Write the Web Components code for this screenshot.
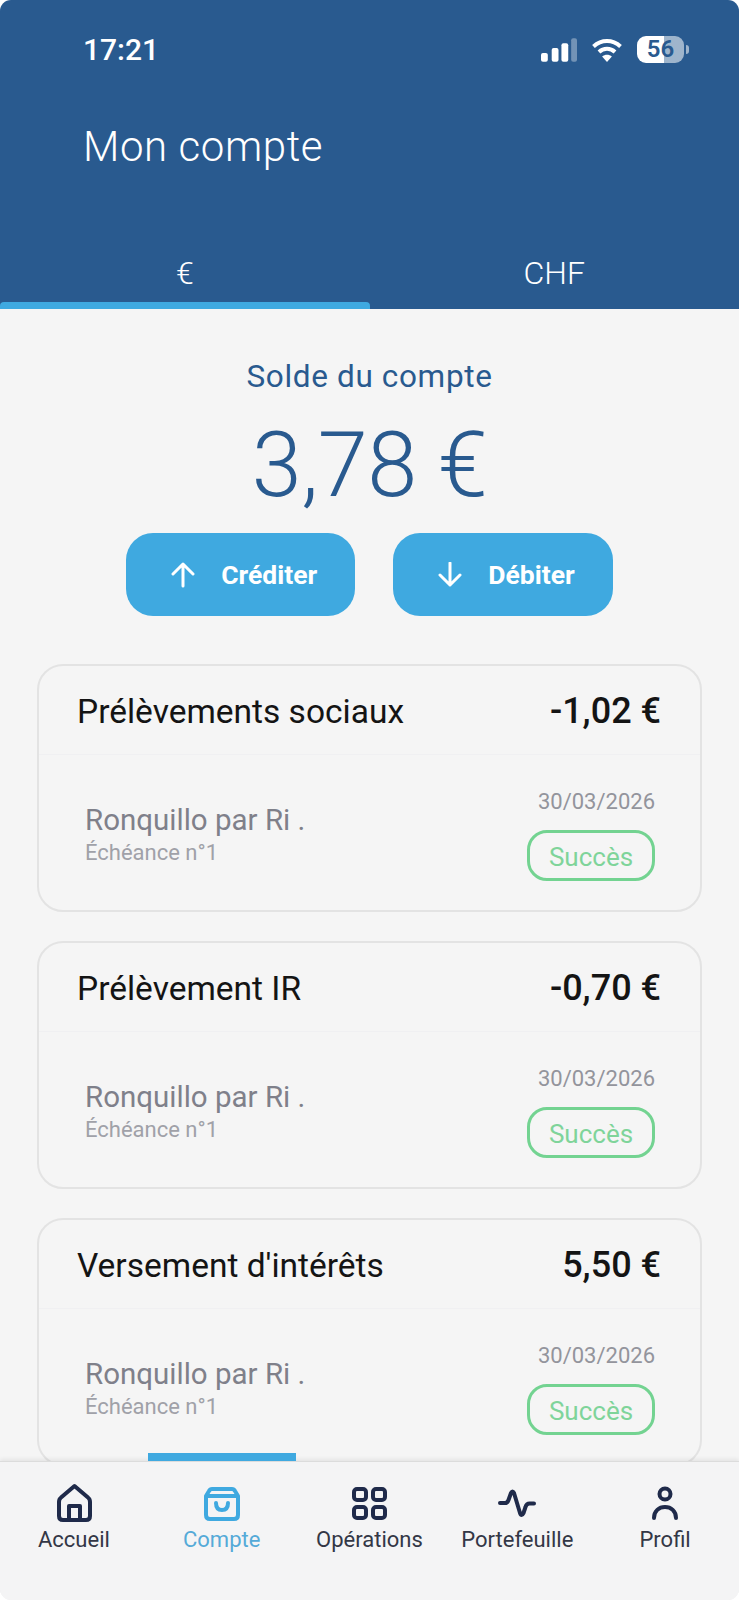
<!DOCTYPE html>
<html>
  <head>
    <meta charset="utf-8">
    <title>Mon compte</title>
    <style>
      html, body { margin: 0; padding: 0; background: #fff; }
      body { width: 739px; height: 1600px; overflow: hidden; font-family: Roboto, "Liberation Sans", sans-serif; }
    </style>
  </head>
  <body>
    <bank-app>
      <app-header slot="header" title="Mon compte" time="17:21" battery="56"></app-header>
      <balance-panel slot="balance" amount="3,78 €"></balance-panel>
      <op-card slot="cards" label="Prélèvements sociaux" amount="-1,02 €"></op-card>
      <op-card slot="cards" label="Prélèvement IR" amount="-0,70 €"></op-card>
      <op-card slot="cards" label="Versement d'intérêts" amount="5,50 €"></op-card>
      <bottom-nav slot="nav"></bottom-nav>
    </bank-app>

    <script>
      var BLUE = "#295a8f";
      var SKY = "#3fa9e0";

      class BankApp extends HTMLElement {
        constructor() {
          super();
          this.attachShadow({mode: "open"}).innerHTML = `
            <style>
              :host { display: flex; flex-direction: column; width: 739px; height: 1600px; background: #f5f5f5; border-radius: 11px; overflow: hidden; }
              main { flex: 1; min-height: 0; overflow: hidden; display: flex; flex-direction: column; }
              .cards { display: flex; flex-direction: column; gap: 29px; margin: 48px 37px 0; }
            </style>
            <slot name="header"></slot>
            <main>
              <slot name="balance"></slot>
              <div class="cards"><slot name="cards"></slot></div>
            </main>
            <slot name="nav"></slot>`;
        }
      }

      class StatusIcons extends HTMLElement {
        constructor() {
          super();
          this.attachShadow({mode: "open"});
        }
        connectedCallback() {
          var level = this.getAttribute("battery");
          this.shadowRoot.innerHTML = `
            <style>
              :host { display: flex; align-items: center; gap: 14px; height: 27px; }
              svg { display: block; }
              .battery { width: 47px; height: 27px; border-radius: 9px; overflow: hidden;
                background: linear-gradient(90deg, #fff 57%, rgba(255,255,255,.55) 57%);
                font: 600 24px/27px Roboto, sans-serif; color: ${BLUE}; text-align: center; }
              .wrap { display: flex; align-items: center; gap: 2px; }
              .nib { width: 3px; height: 9px; border-radius: 0 3px 3px 0; background: rgba(255,255,255,.55); }
            </style>
            <svg width="36" height="24" viewBox="0 0 37 24" fill="#fff">
              <rect x="0" y="15" width="7" height="9" rx="2"/>
              <rect x="11" y="10" width="7" height="14" rx="2"/>
              <rect x="21" y="5" width="7" height="19" rx="2"/>
              <rect x="31" y="0" width="6" height="24" rx="2" opacity=".35"/>
            </svg>
            <svg width="32" height="24" viewBox="0 0 31 24" fill="none" stroke="#fff" stroke-width="4">
              <path d="M2 8.5C10 1.2 21 1.2 29 8.5"/>
              <path d="M7.5 14C12 9.8 19 9.8 23.5 14"/>
              <path d="M15.5 24L10.6 18.6C13.4 16.2 17.6 16.2 20.4 18.6Z" fill="#fff" stroke="none"/>
            </svg>
            <div class="wrap"><div class="battery">${level}</div><div class="nib"></div></div>`;
        }
      }

      class AppHeader extends HTMLElement {
        constructor() {
          super();
          this.attachShadow({mode: "open"});
        }
        connectedCallback() {
          this.shadowRoot.innerHTML = `
            <style>
              :host { display: flex; flex-direction: column; height: 309px; background: ${BLUE}; color: #fff; flex: none; }
              .status { display: flex; justify-content: space-between; align-items: center; height: 27px; margin-top: 36px; padding: 0 50px 0 83px; }
              .time { font-size: 30px; font-weight: 500; }
              h1 { margin: 59px 0 0 83px; font-size: 42px; line-height: 50px; font-weight: 300; letter-spacing: .6px; }
              .tabs { display: flex; margin-top: auto; height: 69px; }
              .tab { flex: 1; display: flex; flex-direction: column; font-size: 32px; font-weight: 300; }
              .tab span { flex: 1; display: flex; align-items: center; justify-content: center; padding-top: 3px; }
              .tab i { display: block; height: 7px; border-radius: 4px 4px 0 0; }
              .tab.on i { background: ${SKY}; }
            </style>
            <div class="status">
              <span class="time">${this.getAttribute("time")}</span>
              <status-icons battery="${this.getAttribute("battery")}"></status-icons>
            </div>
            <h1>${this.getAttribute("title")}</h1>
            <div class="tabs">
              <div class="tab on"><span>€</span><i></i></div>
              <div class="tab"><span>CHF</span><i></i></div>
            </div>`;
        }
      }

      class ActionButton extends HTMLElement {
        constructor() {
          super();
          this.attachShadow({mode: "open"});
        }
        connectedCallback() {
          var d = this.getAttribute("dir") == "up" ? "M12 24V2M2 12L12 2L22 12" : "M12 1V23M2 13L12 23L22 13";
          this.shadowRoot.innerHTML = `
            <style>
              :host { display: flex; align-items: center; gap: 26px; height: 83px; padding: 0 38px 0 45px; border-radius: 27px; background: ${SKY}; color: #fff; font-size: 26.5px; font-weight: 700; box-sizing: border-box; }
              svg { display: block; }
            </style>
            <svg width="24" height="26" viewBox="0 0 24 26" fill="none" stroke="#fff" stroke-width="3" stroke-linecap="round" stroke-linejoin="round"><path d="${d}"/></svg>
            <slot></slot>`;
        }
      }

      class BalancePanel extends HTMLElement {
        constructor() {
          super();
          this.attachShadow({mode: "open"});
        }
        connectedCallback() {
          this.shadowRoot.innerHTML = `
            <style>
              :host { display: flex; flex-direction: column; align-items: center; color: ${BLUE}; }
              .label { margin-top: 48px; font-size: 31.5px; line-height: 40px; font-weight: 400; letter-spacing: .65px; }
              .amount { margin-top: 19px; font-size: 90px; line-height: 100px; font-weight: 350; letter-spacing: -.6px; }
              .actions { display: flex; gap: 38px; margin-top: 17px; }
            </style>
            <div class="label">Solde du compte</div>
            <div class="amount">${this.getAttribute("amount")}</div>
            <div class="actions">
              <action-button dir="up">Créditer</action-button>
              <action-button dir="down">Débiter</action-button>
            </div>`;
        }
      }

      class StatusBadge extends HTMLElement {
        constructor() {
          super();
          this.attachShadow({mode: "open"}).innerHTML = `
            <style>
              :host { display: flex; align-items: center; justify-content: center; width: 128px; height: 51px; box-sizing: border-box; padding-top: 3px; border: 3px solid #73d391; border-radius: 20px; color: #7fd49a; font-size: 26px; font-weight: 400; }
            </style>
            <slot></slot>`;
        }
      }

      class OpCard extends HTMLElement {
        constructor() {
          super();
          this.attachShadow({mode: "open"});
        }
        connectedCallback() {
          this.shadowRoot.innerHTML = `
            <style>
              :host { display: flex; flex-direction: column; height: 248px; box-sizing: border-box; border: 2px solid #e3e3e3; border-radius: 26px; flex: none; }
              .head { display: flex; justify-content: space-between; align-items: center; height: 89px; padding: 2px 39px 0 38px; border-bottom: 1px solid #f0f0f2; box-sizing: border-box; color: #141414; flex: none; }
              .label { font-size: 33.5px; font-weight: 400; }
              .amount { font-size: 36px; font-weight: 500; }
              .body { display: flex; justify-content: space-between; padding: 33px 45px 0 46px; }
              .who { margin-top: 14px; }
              .name { font-size: 29.5px; line-height: 36px; font-weight: 400; color: #7f808a; }
              .term { margin-top: 1px; font-size: 22px; line-height: 28px; color: #a0a1a8; }
              .side { display: flex; flex-direction: column; align-items: flex-end; }
              .date { font-size: 22px; line-height: 28px; color: #93949c; margin-bottom: 14px; }
            </style>
            <div class="head">
              <span class="label">${this.getAttribute("label")}</span>
              <span class="amount">${this.getAttribute("amount")}</span>
            </div>
            <div class="body">
              <div class="who">
                <div class="name">Ronquillo par Ri .</div>
                <div class="term">Échéance n°1</div>
              </div>
              <div class="side">
                <div class="date">30/03/2026</div>
                <status-badge>Succès</status-badge>
              </div>
            </div>`;
        }
      }

      var NAV_ICONS = {
        home: '<path d="M20.5 3L34 14.5Q36 16 36 19V33Q36 37 32 37H9Q5 37 5 33V19Q5 16 7 14.5Z"/><path d="M15 37V23H26V37"/>',
        bag: '<path d="M10 6H30Q32 6 33 8L36 13V32Q36 36 32 36H8Q4 36 4 32V13L7 8Q8 6 10 6Z"/><path d="M4 13H36"/><path d="M14 20Q14 27 20 27Q26 27 26 20" stroke-linecap="round"/>',
        grid: '<rect x="5" y="6" width="12" height="11" rx="3"/><rect x="24" y="6" width="12" height="11" rx="3"/><rect x="5" y="24" width="12" height="11" rx="3"/><rect x="24" y="24" width="12" height="11" rx="3"/>',
        activity: '<path d="M3 20H8Q10.5 20 11.5 17L14 10Q15.5 7 17 10L23 30Q24.5 34 26.5 30L28.5 24Q29.5 20.5 32.5 20.5H37" stroke-linecap="round"/>',
        person: '<circle cx="20" cy="11" r="5.5"/><path d="M9 35C9 28 14 24 20 24C26 24 31 28 31 35" stroke-linecap="round"/>'
      };

      class NavItem extends HTMLElement {
        constructor() {
          super();
          this.attachShadow({mode: "open"});
        }
        connectedCallback() {
          var on = this.hasAttribute("active");
          this.shadowRoot.innerHTML = `
            <style>
              :host { flex: 1; display: flex; flex-direction: column; align-items: center; padding-top: 21px; position: relative; }
              svg { display: block; }
              span { margin-top: 2px; font-size: 22px; line-height: 30px; color: ${on ? "#55aad8" : "#333746"}; white-space: nowrap; }
              .bar { position: absolute; left: 0; right: 0; top: -9px; height: 8px; background: ${SKY}; }
            </style>
            ${on ? '<div class="bar"></div>' : ""}
            <svg width="40" height="40" viewBox="0 0 40 40" fill="none" stroke="${on ? SKY : "#1f2a4a"}" stroke-width="4" stroke-linejoin="round">${NAV_ICONS[this.getAttribute("icon")]}</svg>
            <span>${this.getAttribute("label")}</span>`;
        }
      }

      class BottomNav extends HTMLElement {
        constructor() {
          super();
          this.attachShadow({mode: "open"}).innerHTML = `
            <style>
              :host { display: flex; height: 139px; flex: none; box-sizing: border-box; background: #f4f4f5; border-top: 1px solid #dcdcdc; box-shadow: 0 -2px 4px rgba(0,0,0,.07); position: relative; }
            </style>
            <nav-item icon="home" label="Accueil"></nav-item>
            <nav-item icon="bag" label="Compte" active></nav-item>
            <nav-item icon="grid" label="Opérations"></nav-item>
            <nav-item icon="activity" label="Portefeuille"></nav-item>
            <nav-item icon="person" label="Profil"></nav-item>`;
        }
      }

      customElements.define("status-icons", StatusIcons);
      customElements.define("app-header", AppHeader);
      customElements.define("action-button", ActionButton);
      customElements.define("balance-panel", BalancePanel);
      customElements.define("status-badge", StatusBadge);
      customElements.define("op-card", OpCard);
      customElements.define("nav-item", NavItem);
      customElements.define("bottom-nav", BottomNav);
      customElements.define("bank-app", BankApp);
    </script>
  </body>
</html>
